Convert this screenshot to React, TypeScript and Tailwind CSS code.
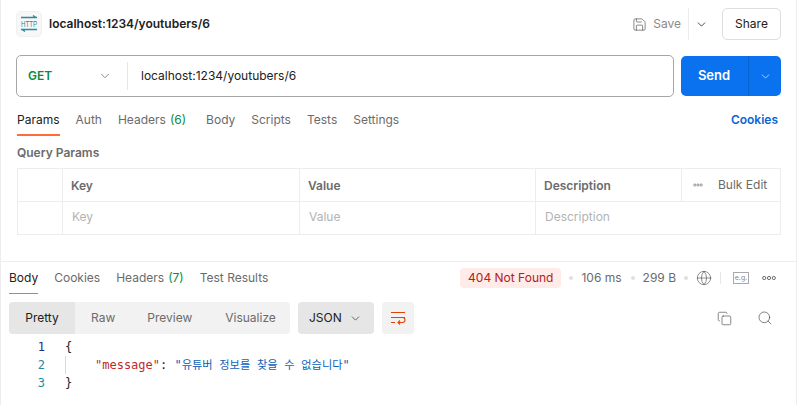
import { ChevronDown, Copy, Search, Globe, Save } from 'lucide-react';

const sans = "font-['Inter','Noto_Sans',sans-serif]";

function HttpIcon() {
  return (
    <div className="w-[26px] h-[26px] rounded-[5px] bg-[#f7f7f7] border border-[#f0f0f0] flex items-center justify-center">
      <svg width="18" height="18" viewBox="0 0 18 18" fill="none" stroke="#2a8ca3" strokeWidth="1.4" className="overflow-visible">
        <path d="M1 2.5h16M13 0.5l3 2" />
        <path d="M1 14.5h16M5 16.5l-3-2" />
        <text x="1" y="12" fontSize="9" fill="#2a8ca3" stroke="none" fontFamily="'Liberation Sans', sans-serif" textLength="16" lengthAdjust="spacingAndGlyphs">HTTP</text>
      </svg>
    </div>
  );
}

function WrapIcon() {
  return (
    <svg width="16" height="14" viewBox="0 0 16 14" fill="none" stroke="#e8400c" strokeWidth="1.1">
      <path d="M1 1.5h14M1 6.5h14M1 11.5h4" />
      <path d="M8 11.5h4.5a2.3 2.3 0 0 0 0-5M10 9.5l-2 2 2 2" />
    </svg>
  );
}

function EgIcon() {
  return (
    <div className="w-[16px] h-[12px] border border-[#a8a8a8] text-[7px] leading-[10px] text-center text-[#8a8a8a]">e.g.</div>
  );
}

function Dots({ color = '#6b6b6b', small = false }: { color?: string; small?: boolean }) {
  return (
    <svg width={small ? 10 : 14} height={small ? 4 : 6} viewBox="0 0 14 6" fill="none" stroke={color} strokeWidth={small ? 1.4 : 1}>
      <circle cx="2.2" cy="3" r="1.6" />
      <circle cx="7" cy="3" r="1.6" />
      <circle cx="11.8" cy="3" r="1.6" />
    </svg>
  );
}

function Sep() {
  return <span className="block w-[4px] h-[4px] rounded-full bg-[#e0e0e0]" />;
}

export default function App() {
  return (
    <div className={`w-[798px] h-[405px] overflow-hidden bg-white text-[12px] flex flex-col ${sans}`}>
      <div className="w-[797px] h-[405px] border-l border-r border-[#ededed] flex flex-col">
        {/* title row */}
        <div className="h-[48px] pl-[15px] pr-[15px] flex items-center">
          <HttpIcon />
          <span className="ml-[7px] font-semibold text-[#212121] text-[12px]">localhost:1234/youtubers/6</span>
          <div className="ml-auto flex items-center">
            <Save size={15} strokeWidth={1.1} className="text-[#555]" />
            <span className="ml-[6px] text-[#8a8a8a]">Save</span>
            <div className="ml-[7px] w-px h-[32px] bg-[#ededed]" />
            <ChevronDown size={13} strokeWidth={1.5} className="ml-[6px] text-[#212121]" />
            <button className="ml-[14px] w-[59px] h-[32px] rounded-[5px] border border-[#dedede] text-[#212121]">Share</button>
          </div>
        </div>

        {/* url bar */}
        <div className="mt-[7px] pl-[15px] pr-[14px] flex items-center">
          <div className="w-[658px] h-[42px] rounded-[5px] border border-[#a6a6a6] flex items-center">
            <div className="w-[110px] pl-[11px] pr-[15px] flex items-center justify-between">
              <span className="font-semibold text-[#0b8a3e]">GET</span>
              <ChevronDown size={14} strokeWidth={1} className="text-[#444]" />
            </div>
            <div className="w-px h-[28px] bg-[#e6e6e6]" />
            <span className="ml-[13px] text-[#212121]">localhost:1234/youtubers/6</span>
          </div>
          <div className="ml-[7px] w-[100px] h-[40px] rounded-[5px] bg-[#0a72ef] flex text-white">
            <div className="w-[66px] flex items-center justify-center font-semibold text-[13px]">Send</div>
            <div className="ml-px w-px bg-[#0862cf]" />
            <div className="flex-1 flex items-center justify-center">
              <ChevronDown size={13} strokeWidth={1.2} />
            </div>
          </div>
        </div>

        {/* request tabs */}
        <div className="mt-[8px] h-[31px] pl-[16px] pr-[18px] flex text-[#6b6b6b]">
          <div className="h-[31px] flex items-center border-b-2 border-[#ff6c37] text-[#212121]">Params</div>
          <div className="ml-[16px] flex items-center h-[29px]">Auth</div>
          <div className="ml-[16px] flex items-center h-[29px]">Headers<span className="ml-1 text-[#0b8a3e]">(6)</span></div>
          <div className="ml-[20px] flex items-center h-[29px]">Body</div>
          <div className="ml-[16px] flex items-center h-[29px]">Scripts</div>
          <div className="ml-[16px] flex items-center h-[29px]">Tests</div>
          <div className="ml-[16px] flex items-center h-[29px]">Settings</div>
          <div className="ml-auto flex items-center h-[29px] font-semibold text-[#0a64d6]">Cookies</div>
        </div>

        <div className="mt-[9px] pl-[16px] font-semibold text-[#6b6b6b] leading-[15px]">Query Params</div>

        {/* params table */}
        <div className="mt-[8px] ml-[16px] w-[764px] h-[67px] border border-[#ededed] flex flex-col">
          <div className="h-[33px] border-b border-[#ededed] flex font-semibold text-[#6b6b6b]">
            <div className="w-[45px] border-r border-[#ededed]" />
            <div className="w-[237px] pl-[8px] pt-[2px] border-r border-[#ededed] flex items-center">Key</div>
            <div className="w-[236px] pl-[8px] pt-[2px] border-r border-[#ededed] flex items-center">Value</div>
            <div className="w-[146px] pl-[8px] pt-[2px] border-r border-[#ededed] flex items-center">Description</div>
            <div className="flex-1 pl-[11px] flex items-center font-normal">
              <Dots color="#8a8a8a" small />
              <span className="ml-[15px]">Bulk Edit</span>
            </div>
          </div>
          <div className="flex-1 flex text-[#b3b3b3]">
            <div className="w-[45px] border-r border-[#ededed]" />
            <div className="w-[237px] pl-[9px] pb-[2px] border-r border-[#ededed] flex items-center">Key</div>
            <div className="w-[236px] pl-[9px] pb-[2px] border-r border-[#ededed] flex items-center">Value</div>
            <div className="pl-[9px] pb-[2px] flex items-center">Description</div>
          </div>
        </div>

        <div className="mt-[26px] h-px bg-[#ededed]" />

        {/* response tabs */}
        <div className="h-[32px] pl-[8px] pr-[20px] flex text-[#6b6b6b]">
          <div className="h-[32px] flex items-center border-b border-[#ff6c37] text-[#212121]">Body</div>
          <div className="ml-[16px] flex items-center">Cookies</div>
          <div className="ml-[16px] flex items-center">Headers<span className="ml-1 text-[#0b8a3e]">(7)</span></div>
          <div className="ml-[16px] flex items-center">Test Results</div>
          <div className="ml-auto flex items-center">
            <span className="h-[20px] px-[8px] rounded-[4px] bg-[#ffebe7] text-[#b3201a] flex items-center">404 Not Found</span>
            <span className="ml-[8px]"><Sep /></span>
            <span className="ml-[8px]">106 ms</span>
            <span className="ml-[9px]"><Sep /></span>
            <span className="ml-[8px]">299 B</span>
            <span className="ml-[8px]"><Sep /></span>
            <Globe size={16} strokeWidth={1} className="ml-[8px] text-[#555]" />
            <div className="ml-[8px] w-px h-[12px] bg-[#e6e6e6]" />
            <div className="ml-[12px]"><EgIcon /></div>
            <div className="ml-[13px]"><Dots /></div>
          </div>
        </div>

        {/* response toolbar */}
        <div className="mt-[8px] pl-[8px] pr-[23px] flex items-center">
          <div className="w-[281px] h-[32px] rounded-[4px] bg-[#f2f2f2] flex items-center text-[#6b6b6b]">
            <div className="w-[66px] h-full rounded-l-[4px] bg-[#e6e6e6] text-[#212121] flex items-center justify-center">Pretty</div>
            <div className="ml-[16px]">Raw</div>
            <div className="ml-[32px]">Preview</div>
            <div className="ml-[33px]">Visualize</div>
          </div>
          <div className="ml-[8px] w-[76px] h-[32px] rounded-[4px] bg-[#e6e6e6] text-[#212121] flex items-center justify-between pl-[11px] pr-[12px]">
            <span>JSON</span>
            <ChevronDown size={13} strokeWidth={1.2} />
          </div>
          <div className="ml-[8px] w-[32px] h-[32px] rounded-[4px] bg-[#f2f2f2] flex items-center justify-center">
            <WrapIcon />
          </div>
          <div className="ml-auto flex items-center gap-[25px] text-[#444]">
            <Copy size={15} strokeWidth={1} />
            <Search size={16} strokeWidth={1} />
          </div>
        </div>

        {/* code */}
        <div className="mt-[4px] flex font-['DejaVu_Sans_Mono','Noto_Sans_CJK_KR',monospace] text-[12px] leading-[18px] whitespace-pre">
          <div className="w-[44px] text-right text-[#1a8aa0]">
            <div className="text-[#2a2a8a]">1</div>
            <div>2</div>
            <div>3</div>
          </div>
          <div className="ml-[20px] text-[#212121]">
            <div>{'{'}</div>
            <div className="border-l border-[#d9d9d9] h-[18px]">
              <span className="ml-[29px] text-[#c02a2a]">"message"</span>: <span className="text-[#0f5fb8]">"<span className="text-[11.2px]">유튜버 정보를 찾을 수 없습니다</span>"</span>
            </div>
            <div>{'}'}</div>
          </div>
        </div>
      </div>
    </div>
  );
}
